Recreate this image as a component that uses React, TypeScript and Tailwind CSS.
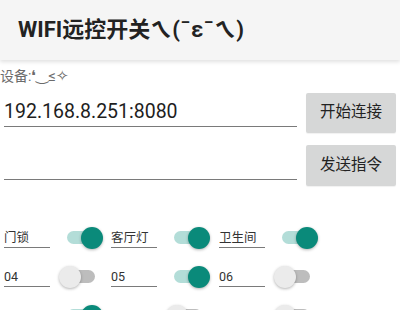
import React, { useState } from "react";

const FONT = { fontFamily: 'Roboto, "Noto Sans CJK SC", sans-serif' };

type Sw = { label: string; on: boolean };

const ROWS: Sw[][] = [
  [
    { label: "门锁", on: true },
    { label: "客厅灯", on: true },
    { label: "卫生间", on: true },
  ],
  [
    { label: "04", on: false },
    { label: "05", on: true },
    { label: "06", on: false },
  ],
  [
    { label: "", on: true },
    { label: "", on: false },
    { label: "", on: false },
  ],
];

function Toggle({ on, onClick }: { on: boolean; onClick: () => void }) {
  return (
    <button type="button" onClick={onClick} className="relative h-[13px] w-[28px] shrink-0">
      <span className={`absolute inset-0 rounded-full ${on ? "bg-[#b3ddd8]" : "bg-[#bdbdbd]"}`} />
      <span
        className={`absolute top-1/2 h-[22px] w-[22px] -translate-y-1/2 rounded-full shadow-[0_1px_3px_rgba(0,0,0,0.3)] ${
          on ? "left-[14px] bg-[#0a8a7a]" : "left-[-8px] bg-[#ebebeb]"
        }`}
      />
    </button>
  );
}

export default function App() {
  const [rows, setRows] = useState(ROWS);
  const [addr, setAddr] = useState("192.168.8.251:8080");
  const [cmd, setCmd] = useState("");

  function flip(r: number, c: number) {
    setRows((prev) => prev.map((row, i) => row.map((s, j) => (i === r && j === c ? { ...s, on: !s.on } : s))));
  }

  return (
    <div className="h-[310px] w-[400px] overflow-hidden bg-white text-[#212121]" style={FONT}>
      <div className="relative z-10 flex h-[60px] items-center bg-[#f5f5f5] pl-[18px] shadow-[0_2px_4px_rgba(0,0,0,0.12)]">
        <h1 className="text-[22px] font-bold leading-none text-[#222]">WIFI远控开关ㄟ(¯ε¯ㄟ)</h1>
      </div>

      <p className="mt-[6px] h-5 text-[14px] leading-5 text-[#6b6b6b]">
        设备:<span className="text-[15px]">❛‿≤✧</span>
      </p>

      <div className="mt-[7px] flex pr-[4px]">
        <div className="ml-[4px] flex h-[34px] w-[293px] items-center border-b border-[#7a7a7a] pt-[3px]">
          <input
            value={addr}
            onChange={(e) => setAddr(e.target.value)}
            className="w-full bg-transparent text-[19.5px] leading-none text-[#1e1e1e] outline-none"
          />
        </div>
        <button className="ml-auto h-[40px] w-[90px] rounded-[2px] bg-[#d6d7d7] text-[15.5px] text-[#222] shadow-[0_1px_1px_rgba(0,0,0,0.06)]">
          开始连接
        </button>
      </div>

      <div className="mt-[12px] flex pr-[4px]">
        <div className="ml-[4px] flex h-[35px] w-[293px] items-center border-b border-[#7a7a7a]">
          <input value={cmd} onChange={(e) => setCmd(e.target.value)} className="w-full bg-transparent text-[19.5px] outline-none" />
        </div>
        <button className="ml-auto h-[41px] w-[90px] rounded-[2px] bg-[#d6d7d7] text-[15.5px] text-[#222] shadow-[0_1px_1px_rgba(0,0,0,0.06)]">
          发送指令
        </button>
      </div>

      <div className="mt-[32px] flex flex-col pl-[4px]">
        {rows.map((row, r) => (
          <div key={r} className="flex h-[39px] items-start">
            {row.map((s, c) => (
              <div key={c} className={`flex items-start ${c === 0 ? "w-[107px]" : "w-[108px]"}`}>
                <div className="mt-[10px] flex h-[20px] w-[46px] items-end border-b border-[#7a7a7a] pb-[3px] text-[12.5px] leading-none text-[#333]">
                  {s.label}
                </div>
                <div className="ml-[17px] mt-[9px]">
                  <Toggle on={s.on} onClick={() => flip(r, c)} />
                </div>
              </div>
            ))}
          </div>
        ))}
      </div>
    </div>
  );
}
